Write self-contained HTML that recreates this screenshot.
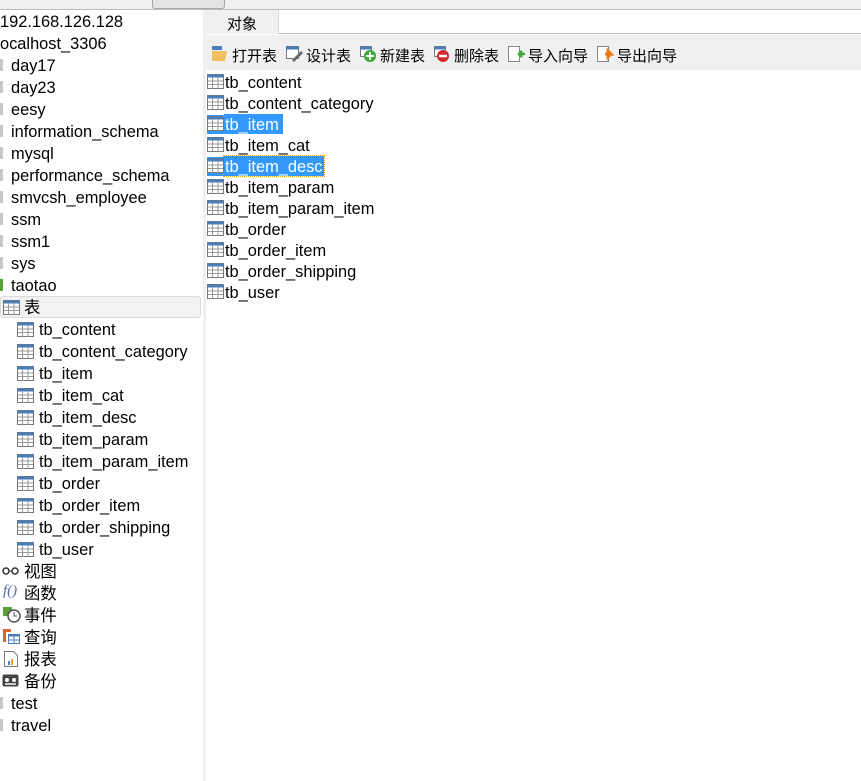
<!DOCTYPE html><html><head><meta charset="utf-8"><style>
body{margin:0;width:861px;height:781px;overflow:hidden;background:#fff;font-family:"Liberation Sans","Noto Sans CJK SC",sans-serif;font-size:16.4px;color:#000;position:relative}
.a{position:absolute;white-space:nowrap}
.r{position:absolute;height:21px;line-height:21px;white-space:nowrap}
svg{position:absolute}
</style></head><body>
<div class="a" style="left:0;top:0;width:861px;height:9px;background:#f0f0f0;border-bottom:1px solid #bdbdbd"></div>
<div class="a" style="left:152px;top:-4px;width:71px;height:11px;background:#e3e3e3;border:1px solid #a8a8a8;border-radius:3px"></div>
<div class="a" style="left:203px;top:10px;width:3px;height:771px;background:#f0f0f0"></div>
<div class="a" style="left:206px;top:10px;width:655px;height:24px;background:#f0f0f0"></div>
<div class="a" style="left:278px;top:10px;width:583px;height:23px;background:#fff;border-bottom:1px solid #bdbdbd;border-left:1px solid #d8d8d8"></div>
<div class="a" style="left:227px;top:13px;font-size:15px">对象</div>
<div class="a" style="left:206px;top:35px;width:655px;height:35px;background:#f0f0f0"></div>
<div class="a" style="left:0;top:296px;width:201px;height:22px;background:#f2f2f2;border:1px solid #dcdcdc;border-radius:3px;box-sizing:border-box"></div>
<div id="c"></div>
<script>
var T='<svg width="17" height="15" viewBox="0 0 17 15"><rect x="0.5" y="0.5" width="16" height="14" fill="#fff" stroke="#777"/><rect x="0.5" y="0.5" width="16" height="3" fill="#4a7ebb"/><path d="M1 7h15M1 10.5h15M5.5 3v12M11 3v12" stroke="#999"/></svg>';
var h='';
function row(x,y,t,icon,ix){h+='<div class="r" style="left:'+x+'px;top:'+(y-9)+'px">'+t+'</div>';if(icon)h+='<div class="a" style="left:'+ix+'px;top:'+(y-7)+'px">'+icon+'</div>';}
var L=[['192.168.126.128',0],['ocalhost_3306',0],['day17',11],['day23',11],['eesy',11],['information_schema',11],['mysql',11],['performance_schema',11],['smvcsh_employee',11],['ssm',11],['ssm1',11],['sys',11],['taotao',11]];
L.forEach(function(e,i){row(e[1],21+i*22,e[0]);});
row(24,307,'表',T,3);
var tb=['tb_content','tb_content_category','tb_item','tb_item_cat','tb_item_desc','tb_item_param','tb_item_param_item','tb_order','tb_order_item','tb_order_shipping','tb_user'];
tb.forEach(function(e,i){row(39,329+i*22,e,T,17);});
['视图','函数','事件','查询','报表','备份'].forEach(function(e,i){row(24,571+i*22,e);});
row(11,703,'test');row(11,725,'travel');
tb.forEach(function(e,i){var y=82+i*21;var sel=(i==2||i==4);
if(sel)h+='<div class="a" style="left:207px;top:'+(y-9)+'px;width:17px;height:19px;background:#3399ff"></div><div class="a" style="left:224px;top:'+(y-10)+'px;width:'+(i==2?59:100)+'px;height:20px;background:#3399ff;'+(i==4?'outline:1px dotted #f90;':'')+'"></div>';
h+='<div class="r" style="left:225px;top:'+(y-9)+'px;'+(sel?'color:#fff':'')+'">'+e+'</div><div class="a" style="left:207px;top:'+(y-8)+'px">'+T+'</div>';});
var tl=[['打开表',232],['设计表',306],['新建表',380],['删除表',454],['导入向导',528],['导出向导',617]];
tl.forEach(function(e){h+='<div class="a" style="left:'+e[1]+'px;top:45px;font-size:15px">'+e[0]+'</div>';});
h+='<svg style="left:211px;top:46px" width="18" height="16"><rect x="1" y="0" width="10" height="4" fill="#4a7ebb"/><path d="M1 5h15l-2 10H1z" fill="#f0c060"/></svg>';
h+='<svg style="left:286px;top:46px" width="18" height="16"><rect x="0.5" y="0.5" width="12" height="12" fill="#fff" stroke="#777"/><rect x="0.5" y="0.5" width="12" height="3" fill="#4a7ebb"/><path d="M6 14l9-9 2 2-9 9z" fill="#666"/></svg>';
h+='<svg style="left:360px;top:46px" width="18" height="16"><rect x="0.5" y="0.5" width="11" height="10" fill="#fff" stroke="#777"/><rect x="0.5" y="0.5" width="11" height="3" fill="#4a7ebb"/><circle cx="10" cy="10" r="6" fill="#3aaa35"/><path d="M10 6v8M6 10h8" stroke="#fff" stroke-width="2"/></svg>';
h+='<svg style="left:434px;top:46px" width="18" height="16"><rect x="0.5" y="0.5" width="11" height="10" fill="#fff" stroke="#777"/><rect x="0.5" y="0.5" width="11" height="3" fill="#4a7ebb"/><circle cx="9" cy="10" r="6" fill="#d9262b"/><path d="M5 10h8" stroke="#fff" stroke-width="2.5"/></svg>';
h+='<svg style="left:508px;top:46px" width="18" height="16"><rect x="0.5" y="0.5" width="11" height="15" fill="#fff" stroke="#888"/><path d="M17 8h-5M14 5l-3 3 3 3" stroke="#3aaa35" stroke-width="2.5" fill="none"/></svg>';
h+='<svg style="left:597px;top:46px" width="18" height="16"><rect x="0.5" y="0.5" width="11" height="15" fill="#fff" stroke="#888"/><path d="M8 8h6l-3-3v6l3-3" stroke="#f07a10" stroke-width="3" fill="none"/></svg>';
h+='<svg style="left:2px;top:566px" width="18" height="10"><circle cx="4" cy="5" r="3" fill="none" stroke="#333" stroke-width="1.5"/><circle cx="13" cy="5" r="3" fill="none" stroke="#333" stroke-width="1.5"/><path d="M7 5h3" stroke="#333"/></svg>';
h+='<div class="a" style="left:3px;top:583px;font-family:\'Liberation Serif\',serif;font-style:italic;color:#4a6fa0;font-size:15px">f()</div>';
h+='<svg style="left:3px;top:607px" width="18" height="16"><rect x="0" y="0" width="9" height="9" fill="#5aa03a"/><circle cx="11" cy="9" r="6" fill="#fff" stroke="#555" stroke-width="1.5"/><path d="M11 5v4h3" stroke="#555" fill="none"/></svg>';
h+='<svg style="left:3px;top:629px" width="18" height="16"><rect x="0" y="0" width="8" height="3" fill="#e0603a"/><rect x="0" y="0" width="3" height="13" fill="#e0603a"/><rect x="5.5" y="5.5" width="11" height="9" fill="#fff" stroke="#4a7ebb"/><rect x="5.5" y="5.5" width="11" height="2" fill="#4a7ebb"/><path d="M11 7v8M6 11h11" stroke="#4a7ebb"/></svg>';
h+='<svg style="left:4px;top:651px" width="16" height="16"><path d="M0.5 0.5h9l4 4v11h-13z" fill="#fff" stroke="#777"/><rect x="4" y="10" width="2" height="4" fill="#4a7ebb"/><rect x="7" y="8" width="2" height="6" fill="#f0a030"/></svg>';
h+='<svg style="left:2px;top:673px" width="18" height="16"><rect x="0.5" y="1.5" width="16" height="12" rx="2" fill="#444"/><circle cx="5" cy="7" r="2" fill="#fff"/><circle cx="12" cy="7" r="2" fill="#fff"/><rect x="3" y="10" width="11" height="2" fill="#ccc"/></svg>';
[65,87,109,131,153,175,197,219,241,263,285,703,725].forEach(function(y){h+='<div class="a" style="left:0;top:'+(y-6)+'px;width:3px;height:12px;background:'+(y==285?'#5aa03a':'#c8c8c8')+'"></div>';});
document.getElementById('c').innerHTML=h;
</script>
</body></html>
